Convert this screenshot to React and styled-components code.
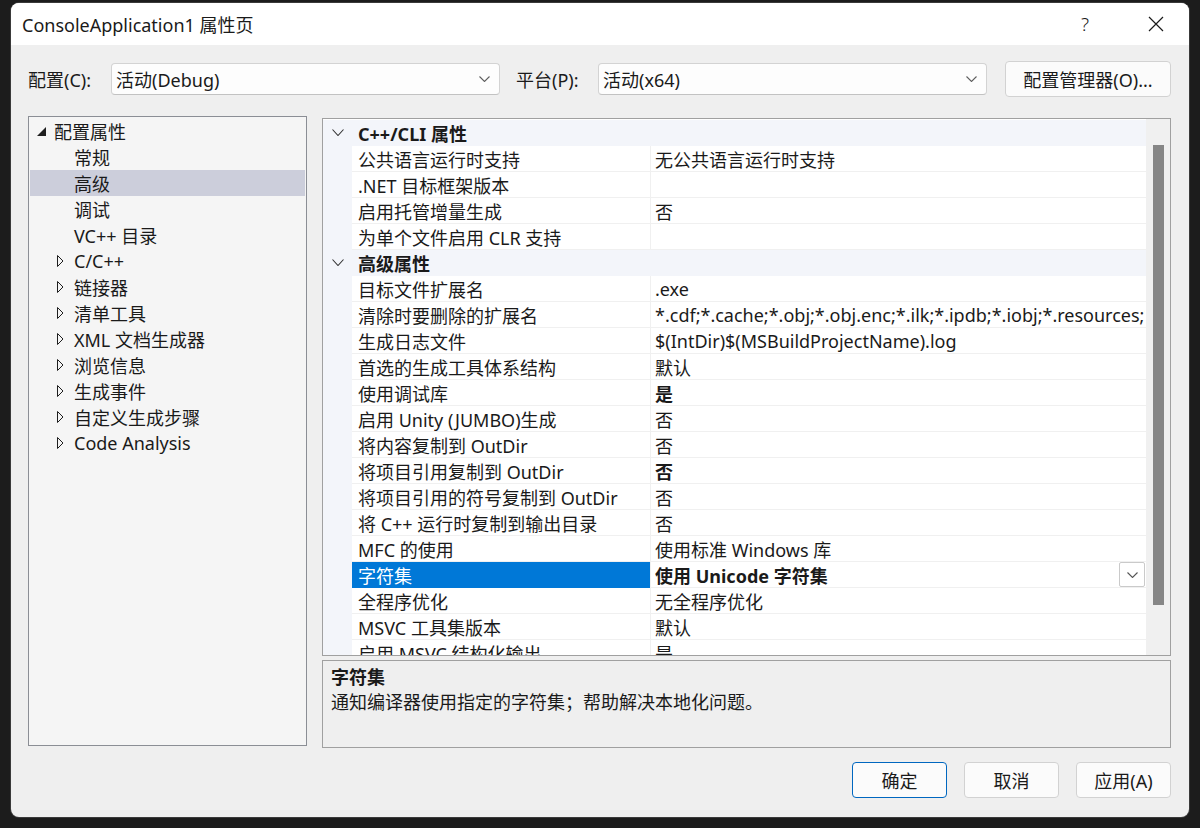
import React from 'react';
import styled, { createGlobalStyle } from 'styled-components';

const GlobalStyle = createGlobalStyle`
	html, body {
		margin: 0;
		padding: 0;
		background: #1c1c1c;
	}
	body {
		font-family: 'Noto Sans', 'Noto Sans CJK SC', sans-serif;
		font-size: 18px;
		color: #1a1a1a;
	}
	* {
		box-sizing: border-box;
	}
`;

const tree = [
	{ label: '配置属性', level: 0, state: 'open' },
	{ label: '常规', level: 1 },
	{ label: '高级', level: 1, selected: true },
	{ label: '调试', level: 1 },
	{ label: 'VC++ 目录', level: 1 },
	{ label: 'C/C++', level: 1, state: 'closed' },
	{ label: '链接器', level: 1, state: 'closed' },
	{ label: '清单工具', level: 1, state: 'closed' },
	{ label: 'XML 文档生成器', level: 1, state: 'closed' },
	{ label: '浏览信息', level: 1, state: 'closed' },
	{ label: '生成事件', level: 1, state: 'closed' },
	{ label: '自定义生成步骤', level: 1, state: 'closed' },
	{ label: 'Code Analysis', level: 1, state: 'closed' },
];

const sections = [
	{
		title: 'C++/CLI 属性',
		rows: [
			{ name: '公共语言运行时支持', value: '无公共语言运行时支持' },
			{ name: '.NET 目标框架版本', value: '' },
			{ name: '启用托管增量生成', value: '否' },
			{ name: '为单个文件启用 CLR 支持', value: '' },
		],
	},
	{
		title: '高级属性',
		rows: [
			{ name: '目标文件扩展名', value: '.exe' },
			{
				name: '清除时要删除的扩展名',
				value: '*.cdf;*.cache;*.obj;*.obj.enc;*.ilk;*.ipdb;*.iobj;*.resources;*.tlb',
			},
			{ name: '生成日志文件', value: '$(IntDir)$(MSBuildProjectName).log' },
			{ name: '首选的生成工具体系结构', value: '默认' },
			{ name: '使用调试库', value: '是', bold: true },
			{ name: '启用 Unity (JUMBO)生成', value: '否' },
			{ name: '将内容复制到 OutDir', value: '否' },
			{ name: '将项目引用复制到 OutDir', value: '否', bold: true },
			{ name: '将项目引用的符号复制到 OutDir', value: '否' },
			{ name: '将 C++ 运行时复制到输出目录', value: '否' },
			{ name: 'MFC 的使用', value: '使用标准 Windows 库' },
			{ name: '字符集', value: '使用 Unicode 字符集', bold: true, selected: true },
			{ name: '全程序优化', value: '无全程序优化' },
			{ name: 'MSVC 工具集版本', value: '默认' },
			{ name: '启用 MSVC 结构化输出', value: '是' },
		],
	},
];

const Chevron = ({ w = 11, h = 6, color = '#5f5f5f' }) => (
	<svg width={w} height={h} viewBox={`0 0 ${w} ${h}`}>
		<path
			d={`M0.5 0.5 L${w / 2} ${h - 0.5} L${w - 0.5} 0.5`}
			fill='none'
			stroke={color}
			strokeWidth='1.1'
		/>
	</svg>
);

const Expander = ({ state }) => (
	<ExpanderBox>
		{state === 'open' && (
			<svg width='9' height='9' viewBox='0 0 9 9'>
				<polygon points='9,0 9,9 0,9' fill='#1e1e1e' />
			</svg>
		)}
		{state === 'closed' && (
			<svg width='7' height='12' viewBox='0 0 7 12'>
				<polygon
					points='0.5,0.5 6,6 0.5,11.5'
					fill='none'
					stroke='#1e1e1e'
					strokeWidth='1'
				/>
			</svg>
		)}
	</ExpanderBox>
);

const App = () => {
	return (
		<>
			<GlobalStyle />
			<Backdrop>
				<Dialog>
					<TitleBar>
						<Title>ConsoleApplication1 属性页</Title>
						<TitleButtons>
							<TitleButton>?</TitleButton>
							<TitleButton>
								<svg width='16' height='16' viewBox='0 0 16 16'>
									<path
										d='M1 1 L15 15 M15 1 L1 15'
										stroke='#1a1a1a'
										strokeWidth='1.2'
									/>
								</svg>
							</TitleButton>
						</TitleButtons>
					</TitleBar>

					<Body>
						<ConfigRow>
							<FieldLabel>配置(C):</FieldLabel>
							<Combo>
								<span>活动(Debug)</span>
								<Chevron />
							</Combo>
							<FieldLabel $gap>平台(P):</FieldLabel>
							<Combo>
								<span>活动(x64)</span>
								<Chevron />
							</Combo>
							<Button $wide>配置管理器(O)...</Button>
						</ConfigRow>

						<Main>
							<TreePanel>
								{tree.map((item) => (
									<TreeRow
										key={item.label}
										$level={item.level}
										$selected={item.selected}
									>
										<Expander state={item.state} />
										<span>{item.label}</span>
									</TreeRow>
								))}
							</TreePanel>

							<RightColumn>
								<Grid>
									<GridList>
										{sections.map((section) => (
											<React.Fragment key={section.title}>
												<CategoryRow>
													<Gutter>
														<Chevron w={12} h={7} color='#333' />
													</Gutter>
													<CategoryTitle>{section.title}</CategoryTitle>
												</CategoryRow>
												{section.rows.map((row) => (
													<PropRow key={row.name}>
														<Gutter />
														<NameCell $selected={row.selected}>{row.name}</NameCell>
														<ValueCell $bold={row.bold}>
															<ValueText>{row.value}</ValueText>
															{row.selected && (
																<DropButton>
																	<Chevron w={11} h={6} color='#555' />
																</DropButton>
															)}
														</ValueCell>
													</PropRow>
												))}
											</React.Fragment>
										))}
									</GridList>
									<ScrollTrack>
										<ScrollThumb />
									</ScrollTrack>
								</Grid>
								<Description>
									<DescTitle>字符集</DescTitle>
									<DescText>通知编译器使用指定的字符集；帮助解决本地化问题。</DescText>
								</Description>
							</RightColumn>
						</Main>

						<Footer>
							<Button $primary>确定</Button>
							<Button>取消</Button>
							<Button>应用(A)</Button>
						</Footer>
					</Body>
				</Dialog>
			</Backdrop>
		</>
	);
};

const Backdrop = styled.div`
	width: 1200px;
	height: 828px;
	padding: 3px 11px 11px 11px;
	display: flex;
	background: #1c1c1c;
`;

const Dialog = styled.div`
	flex: 1;
	min-width: 0;
	display: flex;
	flex-direction: column;
	border-radius: 8px;
	overflow: hidden;
	background: #efefef;
	box-shadow: 0 0 0 1px #3a3a3a;
`;

const TitleBar = styled.div`
	height: 42px;
	flex-shrink: 0;
	background: #ffffff;
	display: flex;
	align-items: center;
	justify-content: space-between;
	padding-left: 11px;
	padding-right: 10px;
`;

const Title = styled.div`
	font-size: 18px;
	color: #1a1a1a;
`;

const TitleButtons = styled.div`
	display: flex;
	gap: 25px;
`;

const TitleButton = styled.div`
	width: 46px;
	height: 32px;
	display: flex;
	align-items: center;
	justify-content: center;
	font-size: 19px;
	font-weight: 300;
	color: #1a1a1a;
`;

const Body = styled.div`
	flex: 1;
	min-width: 0;
	display: flex;
	flex-direction: column;
	padding: 16px 18px 19px 17px;
`;

const ConfigRow = styled.div`
	height: 36px;
	display: flex;
	align-items: center;
`;

const FieldLabel = styled.div`
	width: ${(p) => (p.$gap ? '82px' : '83px')};
	margin-left: ${(p) => (p.$gap ? '16px' : '0')};
	flex-shrink: 0;
	white-space: nowrap;
`;

const Combo = styled.div`
	width: 389px;
	height: 32px;
	flex-shrink: 0;
	display: flex;
	align-items: center;
	justify-content: space-between;
	padding: 0 9px 0 4px;
	background: #fdfdfd;
	border: 1px solid #d3d3d3;
	border-bottom-color: #c2c2c2;
	border-radius: 4px;
`;

const Button = styled.div`
	width: ${(p) => (p.$wide ? '166px' : '95px')};
	height: 36px;
	flex-shrink: 0;
	margin-left: ${(p) => (p.$wide ? 'auto' : '0')};
	display: flex;
	align-items: center;
	justify-content: center;
	background: #fbfbfb;
	border: 1px solid ${(p) => (p.$primary ? '#0067c0' : '#d2d2d2')};
	border-radius: 4px;
	white-space: nowrap;
`;

const Main = styled.div`
	margin-top: 19px;
	height: 632px;
	display: flex;
	gap: 15px;
`;

const TreePanel = styled.div`
	width: 279px;
	height: 630px;
	flex-shrink: 0;
	padding-top: 1px;
	background: #f5f5f5;
	border: 1px solid #8b8e95;
`;

const TreeRow = styled.div`
	height: 26px;
	margin: 0 1px;
	display: flex;
	align-items: center;
	padding-left: ${(p) => 7 + p.$level * 20}px;
	background: ${(p) => (p.$selected ? '#cccedb' : 'transparent')};
	white-space: nowrap;
`;

const ExpanderBox = styled.div`
	width: 17px;
	display: flex;
	align-items: center;
	justify-content: flex-start;
`;

const RightColumn = styled.div`
	flex: 1;
	min-width: 0;
	display: flex;
	flex-direction: column;
	padding-top: 2px;
	gap: 4px;
`;

const Grid = styled.div`
	height: 538px;
	flex-shrink: 0;
	display: flex;
	border: 1px solid #a0a0a0;
	background: #ffffff;
`;

const GridList = styled.div`
	flex: 1;
	overflow: hidden;
	padding-top: 1px;
	min-width: 0;
`;

const CategoryRow = styled.div`
	height: 26px;
	display: flex;
	align-items: center;
	background: #f3f5fa;
`;

const Gutter = styled.div`
	width: 29px;
	height: 100%;
	flex-shrink: 0;
	display: flex;
	align-items: center;
	justify-content: center;
	background: #f3f5fa;
	padding-bottom: 1px;
`;

const CategoryTitle = styled.div`
	padding-left: 6px;
	font-weight: 700;
	white-space: nowrap;
`;

const PropRow = styled.div`
	height: 26px;
	display: flex;
`;

const NameCell = styled.div`
	width: 298px;
	flex-shrink: 0;
	display: flex;
	align-items: center;
	padding-left: 6px;
	white-space: nowrap;
	background: ${(p) => (p.$selected ? '#0078d7' : '#ffffff')};
	color: ${(p) => (p.$selected ? '#ffffff' : '#1a1a1a')};
	border-bottom: 1px solid ${(p) => (p.$selected ? '#0078d7' : '#f0f0f0')};
`;

const ValueCell = styled.div`
	flex: 1;
	min-width: 0;
	display: flex;
	align-items: center;
	justify-content: space-between;
	padding-left: 4px;
	padding-right: 1px;
	overflow: hidden;
	white-space: nowrap;
	font-weight: ${(p) => (p.$bold ? 700 : 400)};
	border-left: 1px solid #f0f0f0;
	border-bottom: 1px solid #f0f0f0;
`;

const ValueText = styled.span`
	min-width: 0;
	overflow: hidden;
	white-space: nowrap;
`;

const DropButton = styled.div`
	width: 26px;
	height: 25px;
	flex-shrink: 0;
	display: flex;
	align-items: center;
	justify-content: center;
	background: #ffffff;
	border: 1px solid #cacaca;
	border-radius: 2px;
`;

const ScrollTrack = styled.div`
	width: 24px;
	flex-shrink: 0;
	background: #f0f0f0;
	padding: 26px 0 0 7px;
`;

const ScrollThumb = styled.div`
	width: 11px;
	height: 460px;
	background: #868686;
`;

const Description = styled.div`
	flex: 1;
	border: 1px solid #a0a0a0;
	background: #efefef;
	padding: 4px 8px;
	line-height: 25px;
`;

const DescTitle = styled.div`
	font-weight: 700;
`;

const DescText = styled.div``;

const Footer = styled.div`
	margin-top: 14px;
	display: flex;
	justify-content: flex-end;
	gap: 17px;
`;

export default App;
